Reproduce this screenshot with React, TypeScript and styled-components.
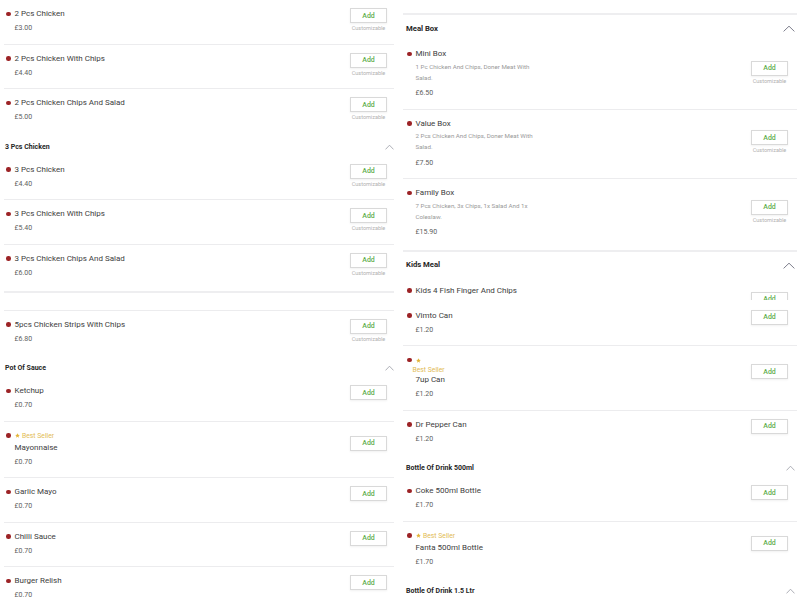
import React from "react";
import styled, { createGlobalStyle } from "styled-components";

const GlobalStyle = createGlobalStyle`
  html, body {
    margin: 0;
    padding: 0;
    background: #ffffff;
    overflow: hidden;
  }
  body {
    font-family: Roboto, "Liberation Sans", Arial, sans-serif;
  }
`;

type Item = {
  name: string;
  price: string;
  desc?: string;
  custom?: boolean;
  best?: boolean;
  stacked?: boolean;
  clip?: boolean;
};

const Page = styled.div`
  display: grid;
  grid-template-columns: 390px 394px;
  column-gap: 9px;
  padding-left: 4px;
  height: 600px;
  overflow: hidden;
  align-items: start;
`;

const Column = styled.div<{ $inset: number }>`
  --inset: ${(p) => p.$inset}px;
  display: flex;
  flex-direction: column;
`;

const Section = styled.div<{ $pb?: number }>`
  display: flex;
  flex-direction: column;
  padding-bottom: ${(p) => p.$pb ?? 0}px;
`;

const Spacer = styled.div<{ $h: number; $line?: boolean }>`
  height: ${(p) => p.$h}px;
  border-bottom: ${(p) => (p.$line ? "1px solid #ececee" : "none")};
`;

const Band = styled.div`
  height: 2px;
  background: #eeeef0;
`;

const Header = styled.div<{ $big?: boolean }>`
  display: flex;
  justify-content: space-between;
  align-items: center;
  padding: ${(p) => (p.$big ? "7.5px" : "8px")} calc(var(--inset) - 1px)
    ${(p) => (p.$big ? "5.5px" : "3px")} var(--inset);
  line-height: 12px;
  font-size: ${(p) => (p.$big ? 7.7 : 7)}px;
  font-weight: 700;
  color: #262626;
`;

const Row = styled.div`
  display: flex;
  align-items: center;
  padding: 0 calc(var(--inset) - 1px) 0 calc(var(--inset) + 1px);
  border-bottom: 1px solid #ececee;
  flex-shrink: 0;

  &:last-child {
    border-bottom: none;
  }
`;

const Info = styled.div`
  flex: 1;
  display: flex;
  align-items: flex-start;
  padding: 8px 0 9.5px;
`;

const DotCol = styled.div`
  width: 8.5px;
  height: 12px;
  display: flex;
  align-items: center;
  flex-shrink: 0;
`;

const Dot = styled.span`
  width: 4.5px;
  height: 4.5px;
  border-radius: 50%;
  background: #9c2326;
`;

const Content = styled.div`
  display: flex;
  flex-direction: column;
  align-items: flex-start;
`;

const BadgeLine = styled.div<{ $stacked?: boolean }>`
  display: flex;
  flex-direction: ${(p) => (p.$stacked ? "column" : "row")};
  align-items: ${(p) => (p.$stacked ? "flex-start" : "center")};
  gap: ${(p) => (p.$stacked ? 0 : 2.5)}px;
  min-height: 12px;
`;

const StarBox = styled.span`
  height: 12px;
  display: flex;
  align-items: center;
`;

const BadgeText = styled.span<{ $stacked?: boolean }>`
  font-size: 6.8px;
  line-height: ${(p) => (p.$stacked ? 8 : 12)}px;
  color: #e2bb55;
  margin-left: ${(p) => (p.$stacked ? -3 : 0)}px;
`;

const Title = styled.div`
  font-size: 8px;
  line-height: 12px;
  color: #404040;
  white-space: nowrap;
`;

const Desc = styled.div`
  font-size: 6.2px;
  line-height: 11px;
  color: #999999;
  margin-top: 1.5px;
  max-width: 130px;
`;

const Price = styled.div<{ $gap: number }>`
  font-size: 7px;
  line-height: 12px;
  color: #606060;
  margin-top: ${(p) => p.$gap}px;
`;

const Clip = styled.div`
  height: 23px;
  margin-bottom: 2px;
  overflow: hidden;
  flex-shrink: 0;

  ${Desc}, ${Price} {
    visibility: hidden;
  }
`;

const Action = styled.div`
  display: flex;
  flex-direction: column;
  align-items: center;
  margin-right: 7px;
  flex-shrink: 0;
`;

const AddButton = styled.div`
  box-sizing: border-box;
  width: 37px;
  height: 15px;
  display: flex;
  align-items: center;
  justify-content: center;
  border: 1px solid #d9d9d9;
  background: #ffffff;
  box-shadow: 0 1px 2px rgba(0, 0, 0, 0.06);
  color: #5fae4c;
  font-size: 7px;
  font-weight: 500;
`;

const Note = styled.div`
  height: 10px;
  line-height: 10px;
  padding-bottom: 2.5px;
  font-size: 5.5px;
  color: #b0b0b0;
`;

const Star = () => (
  <svg width="5" height="5" viewBox="0 0 10 10">
    <path
      d="M5 0.4 L6.35 3.45 L9.7 3.75 L7.15 5.95 L7.9 9.3 L5 7.55 L2.1 9.3 L2.85 5.95 L0.3 3.75 L3.65 3.45 Z"
      fill="#e3b53a"
    />
  </svg>
);

const Chevron = ({ big }: { big?: boolean }) =>
  big ? (
    <svg width="12" height="7" viewBox="0 0 12 7">
      <polyline points="0.6,6.4 6,1.2 11.4,6.4" fill="none" stroke="#6f7180" strokeWidth="0.9" />
    </svg>
  ) : (
    <svg width="9" height="6" viewBox="0 0 9 6">
      <polyline points="0.5,5.4 4.5,1.2 8.5,5.4" fill="none" stroke="#9a9ca6" strokeWidth="0.8" />
    </svg>
  );

const ItemRow = ({ item }: { item: Item }) => {
  const row = (
    <Row>
      <Info>
        <DotCol>
          <Dot />
        </DotCol>
        <Content>
          {item.best && (
            <BadgeLine $stacked={item.stacked}>
              <StarBox>
                <Star />
              </StarBox>
              <BadgeText $stacked={item.stacked}>Best Seller</BadgeText>
            </BadgeLine>
          )}
          <Title>{item.name}</Title>
          {item.desc && <Desc>{item.desc}</Desc>}
          <Price $gap={item.desc ? 3.5 : 2}>{item.price}</Price>
        </Content>
      </Info>
      <Action>
        <AddButton>Add</AddButton>
        <Note>{item.custom ? "Customizable" : ""}</Note>
      </Action>
    </Row>
  );
  return item.clip ? <Clip>{row}</Clip> : row;
};

const twoPcs: Item[] = [
  { name: "2 Pcs Chicken", price: "£3.00", custom: true },
  { name: "2 Pcs Chicken With Chips", price: "£4.40", custom: true },
  { name: "2 Pcs Chicken Chips And Salad", price: "£5.00", custom: true },
];

const threePcs: Item[] = [
  { name: "3 Pcs Chicken", price: "£4.40", custom: true },
  { name: "3 Pcs Chicken With Chips", price: "£5.40", custom: true },
  { name: "3 Pcs Chicken Chips And Salad", price: "£6.00", custom: true },
];

const strips: Item[] = [
  { name: "5pcs Chicken Strips With Chips", price: "£6.80", custom: true },
];

const sauces: Item[] = [
  { name: "Ketchup", price: "£0.70" },
  { name: "Mayonnaise", price: "£0.70", best: true },
  { name: "Garlic Mayo", price: "£0.70" },
  { name: "Chilli Sauce", price: "£0.70" },
  { name: "Burger Relish", price: "£0.70" },
];

const mealBox: Item[] = [
  {
    name: "Mini Box",
    price: "£6.50",
    desc: "1 Pc Chicken And Chips, Doner Meat With Salad.",
    custom: true,
  },
  {
    name: "Value Box",
    price: "£7.50",
    desc: "2 Pcs Chicken And Chips, Doner Meat With Salad.",
    custom: true,
  },
  {
    name: "Family Box",
    price: "£15.90",
    desc: "7 Pcs Chicken, 3x Chips, 1x Salad And 1x Coleslaw.",
    custom: true,
  },
];

const kidsMeal: Item[] = [
  {
    name: "Kids 4 Fish Finger And Chips",
    price: "£3.50",
    desc: "4 Fish Fingers With Chips.",
    clip: true,
  },
  { name: "Vimto Can", price: "£1.20" },
  { name: "7up Can", price: "£1.20", best: true, stacked: true },
  { name: "Dr Pepper Can", price: "£1.20" },
];

const bottles: Item[] = [
  { name: "Coke 500ml Bottle", price: "£1.70" },
  { name: "Fanta 500ml Bottle", price: "£1.70", best: true },
];

const App: React.FC = () => {
  return (
    <>
      <GlobalStyle />
      <Page>
        <Column $inset={1}>
          <Section>
            {twoPcs.map((item) => (
              <ItemRow key={item.name} item={item} />
            ))}
          </Section>
          <Section $pb={3}>
            <Header>
              3 Pcs Chicken
              <Chevron />
            </Header>
            {threePcs.map((item) => (
              <ItemRow key={item.name} item={item} />
            ))}
          </Section>
          <Band />
          <Spacer $h={16.5} $line />
          <Section>
            {strips.map((item) => (
              <ItemRow key={item.name} item={item} />
            ))}
          </Section>
          <Section>
            <Header>
              Pot Of Sauce
              <Chevron />
            </Header>
            {sauces.map((item) => (
              <ItemRow key={item.name} item={item} />
            ))}
          </Section>
        </Column>

        <Column $inset={3}>
          <Spacer $h={13} />
          <Band />
          <Section $pb={2}>
            <Header $big>
              Meal Box
              <Chevron big />
            </Header>
            {mealBox.map((item) => (
              <ItemRow key={item.name} item={item} />
            ))}
          </Section>
          <Band />
          <Section>
            <Header $big>
              Kids Meal
              <Chevron big />
            </Header>
            {kidsMeal.map((item) => (
              <ItemRow key={item.name} item={item} />
            ))}
          </Section>
          <Section>
            <Header>
              Bottle Of Drink 500ml
              <Chevron />
            </Header>
            {bottles.map((item) => (
              <ItemRow key={item.name} item={item} />
            ))}
          </Section>
          <Section>
            <Header>
              Bottle Of Drink 1.5 Ltr
              <Chevron />
            </Header>
          </Section>
        </Column>
      </Page>
    </>
  );
};

export default App;
